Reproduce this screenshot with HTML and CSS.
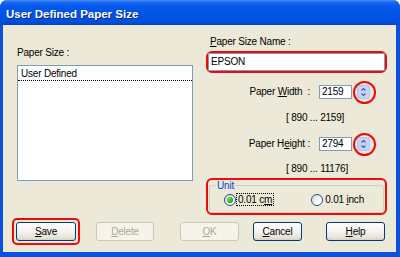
FILE: index.html
```html
<!DOCTYPE html>
<html>
<head>
<meta charset="utf-8">
<link rel="stylesheet" href="styles.css">
</head>
<body>
<div class="window">
  <div class="titlebar">User Defined Paper Size</div>
  <div class="client">
    <div class="top">
      <div class="left">
        <div class="label">Paper Size :</div>
        <div class="list"><div class="item">User Defined</div></div>
      </div>
      <div class="right">
        <div class="label name-label"><u>P</u>aper Size Name :</div>
        <div class="hl hl-name"><div class="text-input">EPSON</div></div>
        <div class="field-row row-first">
          <span class="field-label">Paper <u>W</u>idth&nbsp; :</span>
          <span class="num">2159</span>
          <span class="spinner">
            <svg width="13" height="14" viewBox="0 0 13 14"><rect x="0.5" y="0.5" width="12" height="13" rx="2" fill="#C3D4FA" stroke="#AFC4F3"/><path d="M4.5 5.5 L6.5 3.5 L8.5 5.5" fill="none" stroke="#4D6185" stroke-width="1.2"/><path d="M4.5 8.5 L6.5 10.5 L8.5 8.5" fill="none" stroke="#4D6185" stroke-width="1.2"/></svg>
            <span class="ring"></span>
          </span>
        </div>
        <div class="range range-first">[ 890 ... 2159]</div>
        <div class="field-row row-second">
          <span class="field-label">Paper H<u>e</u>ight :</span>
          <span class="num">2794</span>
          <span class="spinner">
            <svg width="13" height="14" viewBox="0 0 13 14"><rect x="0.5" y="0.5" width="12" height="13" rx="2" fill="#C3D4FA" stroke="#AFC4F3"/><path d="M4.5 5.5 L6.5 3.5 L8.5 5.5" fill="none" stroke="#4D6185" stroke-width="1.2"/><path d="M4.5 8.5 L6.5 10.5 L8.5 8.5" fill="none" stroke="#4D6185" stroke-width="1.2"/></svg>
            <span class="ring"></span>
          </span>
        </div>
        <div class="range range-second">[ 890 ... 11176]</div>
        <div class="hl hl-unit">
          <fieldset class="group">
            <legend>Unit</legend>
            <div class="radios">
              <span class="radio checked"><span class="dot"></span></span>
              <span class="radio-text focus">0.01 c<u>m</u></span>
              <span class="radio radio-inch"></span>
              <span class="radio-text">0.01 <u>i</u>nch</span>
            </div>
          </fieldset>
        </div>
      </div>
    </div>
    <div class="buttons">
      <div class="hl hl-save"><div class="btn b-save"><u>S</u>ave</div></div>
      <div class="btn disabled b-delete"><u>D</u>elete</div>
      <div class="btn disabled b-ok"><u>O</u>K</div>
      <div class="btn b-cancel"><u>C</u>ancel</div>
      <div class="btn b-help"><u>H</u>elp</div>
    </div>
  </div>
</div>
</body>
</html>
```

FILE: styles.css
```css
* { box-sizing: border-box; }
html, body { margin: 0; padding: 0; background: #fff; }
body {
  font-family: "Liberation Sans", Arial, sans-serif;
  font-size: 10px;
  letter-spacing: -0.2px;
  color: #000;
}
u { text-decoration: underline; text-underline-offset: 1px; }

.window {
  width: 400px;
  height: 257px;
  background: #0A52DE;
  border-radius: 7px 7px 0 0;
  display: flex;
  flex-direction: column;
  overflow: hidden;
}
.titlebar {
  height: 25px;
  padding: 2px 0 0 6px;
  line-height: 24px;
  font-size: 11.5px;
  font-weight: bold;
  letter-spacing: 0;
  color: #fff;
  text-shadow: 1px 1px 0 #0A2A8C;
  background: linear-gradient(#4A93F8 0, #1C6AF2 2px, #0458EB 6px, #0055E6 14px, #0050DE 20px, #0046CF 25px);
}
.client {
  height: 227px;
  margin: 0 4px 0 3px;
  background: #ECE9D8;
  display: flex;
  flex-direction: column;
}
.top {
  display: flex;
  align-items: flex-start;
  height: 190px;
}
.left {
  margin-left: 14px;
  width: 176px;
  padding-top: 22px;
}
.label { line-height: 12px; white-space: nowrap; }
.left .label { margin-bottom: 6px; }
.list {
  width: 176px;
  height: 116px;
  background: #fff;
  border: 1px solid #7F9DB9;
}
.item {
  padding: 2px 0 0 3px;
  line-height: 12px;
  border-bottom: 1px dotted #000;
}
.right {
  margin-left: 13px;
  width: 181px;
  padding-top: 11px;
}
.name-label { padding-left: 4px; }
.hl {
  border: 2px solid #EE0A0A;
  border-radius: 6px;
}
.hl-name { margin-top: 3px; height: 22px; }
.text-input {
  height: 18px;
  background: #fff;
  border: 1px solid #7F9DB9;
  padding-left: 2px;
  line-height: 16px;
}
.field-row {
  display: flex;
  align-items: center;
  justify-content: flex-end;
  height: 14px;
  padding-right: 17px;
}
.row-first { margin-top: 12px; }
.row-second { margin-top: 13px; }
.field-label { margin-right: 9px; line-height: 12px; white-space: nowrap; }
.num {
  width: 33px;
  height: 14px;
  background: #fff;
  border: 1px solid #7F9DB9;
  padding-left: 2px;
  line-height: 12px;
}
.spinner {
  position: relative;
  margin-left: 5px;
  width: 13px;
  height: 14px;
  display: block;
}
.spinner svg { display: block; }
.ring {
  position: absolute;
  left: -4px;
  top: -4px;
  width: 23px;
  height: 23px;
  border: 2.6px solid #EE0A0A;
  border-radius: 50%;
}
.range {
  padding-left: 80px;
  line-height: 12px;
  white-space: nowrap;
}
.range-first { margin-top: 13px; }
.range-second { margin-top: 12px; }
.hl-unit { margin-top: 3px; height: 37px; }
.group {
  margin: 0 1px;
  padding: 0 0 4px 0;
  border: 1px solid #D0D0BF;
  border-radius: 3px;
  min-width: 0;
}
.group legend {
  margin-left: 6px;
  padding: 0 1px;
  line-height: 11px;
  color: #0046D5;
}
.radios {
  display: flex;
  align-items: center;
  height: 17px;
  padding-left: 14px;
}
.radio {
  width: 12px;
  height: 12px;
  border: 1px solid #1C5180;
  border-radius: 50%;
  background: linear-gradient(135deg, #D6D5CE, #FFFFFF 70%);
  display: grid;
  place-items: center;
}
.dot {
  width: 6px;
  height: 6px;
  border-radius: 50%;
  background: radial-gradient(circle at 35% 35%, #6EE06A, #21A121 70%, #168C16);
}
.radio-text { line-height: 11px; white-space: nowrap; padding-left: 2px; }
.focus {
  border: 1px dotted #000;
  padding: 0 1px 0 1px;
  margin-left: 0;
}
.radio-inch { margin-left: 37px; }
.buttons {
  display: flex;
  align-items: center;
  margin-top: 3px;
  padding-left: 9px;
}
.hl-save { padding: 2px; border-radius: 5px; }
.btn {
  height: 19px;
  line-height: 17px;
  text-align: center;
  border: 1px solid #003C74;
  border-radius: 3px;
  background: linear-gradient(#FFFFFF, #F3F2EE 50%, #E6E3DA 85%, #D6D0C5);
}
.btn.disabled {
  border-color: #C9C7BA;
  background: #F5F4EA;
  color: #ACA899;
}
.b-save { width: 60px; }
.b-delete { width: 58px; margin-left: 16px; }
.b-ok { width: 59px; margin-left: 26px; }
.b-cancel { width: 49px; margin-left: 14px; }
.b-help { width: 59px; margin-left: 24px; }
```
